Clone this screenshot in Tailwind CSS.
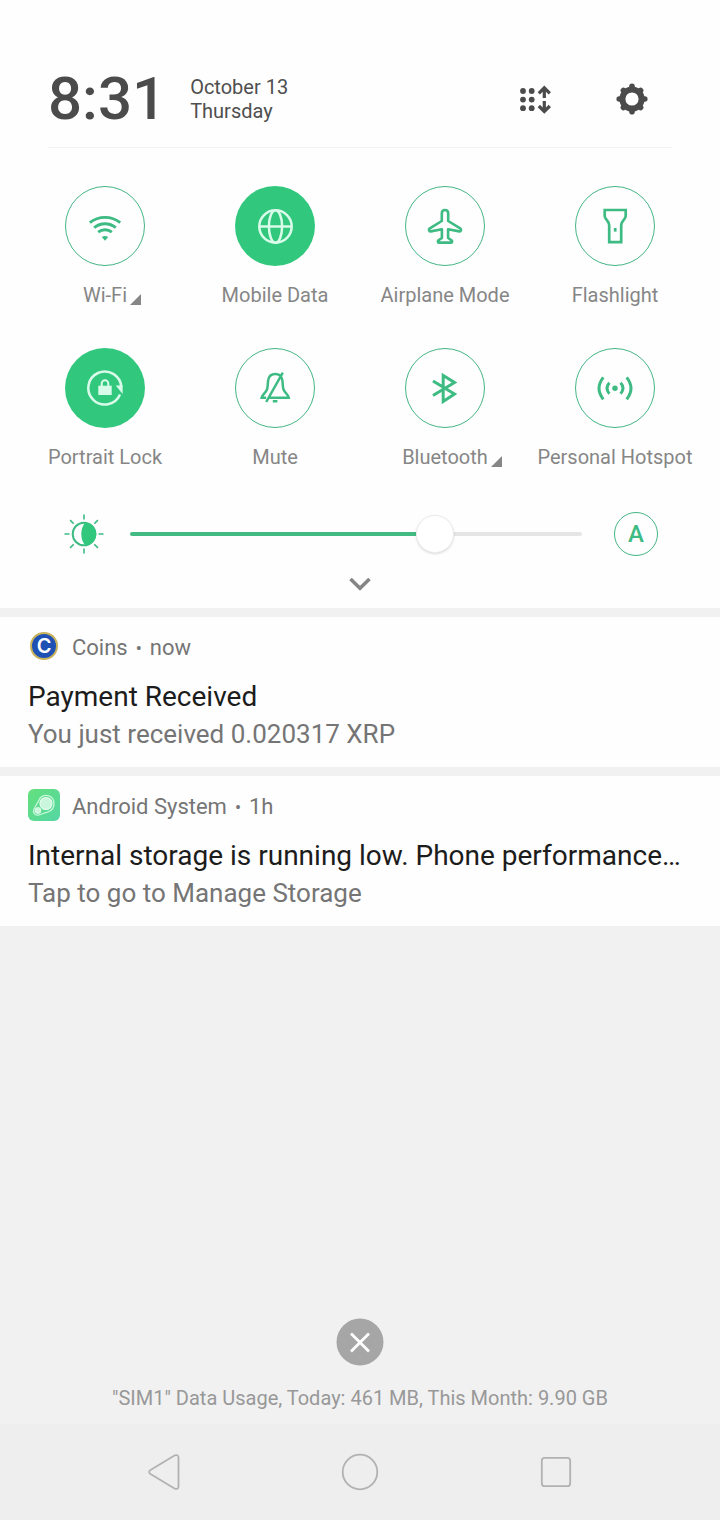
<!DOCTYPE html>
<html lang="en">
<head>
    <meta charset="UTF-8">
    <meta name="viewport" content="width=device-width, initial-scale=1.0">
    <title>Notification Shade</title>
    <script src="https://cdn.jsdelivr.net/npm/@tailwindcss/browser@4"></script>
</head>
<body class="bg-[#f1f1f1] font-[Roboto,sans-serif] min-h-screen flex flex-col">

    <!-- Quick settings -->
    <section class="bg-[#fefefe] pt-[50px]">
        <header class="mx-12 h-[98px] flex items-center border-b border-[#f1f1f1]">
            <time class="text-[60px] leading-none font-medium text-[#4b4b4b]">8:31</time>
            <p class="ml-6 text-xl leading-6 text-[#4f4f4f]">October 13<br>Thursday</p>
            <div class="ml-auto mr-5 flex gap-14">
                <button aria-label="Edit tiles" class="size-10">
                    <svg viewBox="0 0 40 40" class="size-10" fill="#4b4b4b">
                        <circle cx="7" cy="12" r="2.9"/><circle cx="15.7" cy="12" r="2.9"/>
                        <circle cx="7" cy="20.6" r="2.9"/><circle cx="15.7" cy="20.6" r="2.9"/>
                        <circle cx="7" cy="29.2" r="2.9"/><circle cx="15.7" cy="29.2" r="2.9"/>
                        <path d="M28.3 19V9M22.8 14.3l5.5-5.5 5.5 5.5M28.3 22v10M22.8 27l5.5 5.5 5.5-5.5" fill="none" stroke="#4b4b4b" stroke-width="3.2"/>
                    </svg>
                </button>
                <button aria-label="Settings" class="size-10">
                    <svg viewBox="-20 -20 40 40" class="size-10" fill="none" stroke="#4b4b4b">
                        <circle r="9.6" stroke-width="6"/>
                        <path d="M0-11v-1.8M0 11v1.8M-11 0h-1.8M11 0h1.8M-7.8-7.8l-.8-.8M7.8-7.8l.8-.8M-7.8 7.8l-.8.8M7.8 7.8l.8.8" stroke-width="5.6" stroke-linecap="round"/>
                    </svg>
                </button>
            </div>
        </header>

        <div class="px-5 pt-[38px] grid grid-cols-4 gap-y-[39px] text-xl leading-7 text-[#868686]">
            <button class="flex flex-col items-center gap-[15px]">
                <span class="size-20 rounded-full border border-[#45b585] flex items-center justify-center">
                    <svg viewBox="0 0 40 40" class="size-10" fill="none" stroke="#3dbb83" stroke-width="2.9">
                        <path d="M4.8 16.6C13.5 9.6 26.5 9.6 35.2 16.6M9.2 21.6C15.5 16.4 24.5 16.4 30.8 21.6M13.2 26.2C17 23 23 23 26.8 26.2"/>
                        <path d="M16.8 31q3.2-2 6.4 0L20 34.8z" fill="#3dbb83" stroke="none"/>
                    </svg>
                </span>
                <span class="relative">Wi-Fi
                    <svg viewBox="0 0 11 11" class="absolute left-full bottom-1 ml-[3px] size-[11px]"><path d="M11 0v11H0z" fill="#868686"/></svg>
                </span>
            </button>
            <button class="flex flex-col items-center gap-[15px]">
                <span class="size-20 rounded-full bg-[#31c87e] flex items-center justify-center">
                    <svg viewBox="0 0 40 40" class="size-10" fill="none" stroke="#d9fbe9" stroke-width="2.5">
                        <circle cx="20.5" cy="20.5" r="16.2"/>
                        <ellipse cx="20.5" cy="20.5" rx="6.6" ry="16.2"/>
                        <path d="M4.3 20.5h32.4"/>
                    </svg>
                </span>
                <span>Mobile Data</span>
            </button>
            <button class="flex flex-col items-center gap-[15px]">
                <span class="size-20 rounded-full border border-[#45b585] flex items-center justify-center">
                    <svg viewBox="0 0 40 40" class="size-10" fill="none" stroke="#3dbb83" stroke-width="2.6" stroke-linejoin="round">
                        <path d="M20 4c-2 0-3.2 1.6-3.2 3.6V15L4.8 22.4c-1.6 1-.8 3.4 1 3l11.1-2.2V32l-3.5 2.3c-.9.7-.6 2.3.4 2.3h12.4c1 0 1.3-1.6.4-2.3L23.1 32v-8.8l11.1 2.2c1.8.4 2.6-2 1-3L23.2 15V7.600C23.200 5.600 22 4 20 4z"/>
                    </svg>
                </span>
                <span>Airplane Mode</span>
            </button>
            <button class="flex flex-col items-center gap-[15px]">
                <span class="size-20 rounded-full border border-[#45b585] flex items-center justify-center">
                    <svg viewBox="0 0 40 40" class="size-10" fill="none" stroke="#3dbb83" stroke-width="2.7">
                        <path d="M9.7 4h21v6c0 3.500-4.500 5-4.500 9v17.200h-12V19c0-4-4.500-5.500-4.500-9z"/>
                        <path d="M20.200 22v3.600"/>
                    </svg>
                </span>
                <span>Flashlight</span>
            </button>
            <button class="flex flex-col items-center gap-[15px]">
                <span class="size-20 rounded-full bg-[#31c87e] flex items-center justify-center">
                    <svg viewBox="0 0 40 40" class="size-10" fill="none" stroke="#d9fbe9" stroke-width="2.500">
                        <path d="M35 26.500A16.500 16.500 0 1 1 36.300 19"/>
                        <path d="M30.800 17.500h6.800v8.500z" fill="#d9fbe9" stroke="none"/>
                        <path d="M13.300 17.700h13.400V27H13.300z" fill="#d9fbe9" stroke="none"/>
                        <path d="M16.700 18v-2.500a3.300 3.300 0 0 1 6.600 0V18" stroke-width="2"/>
                    </svg>
                </span>
                <span>Portrait Lock</span>
            </button>
            <button class="flex flex-col items-center gap-[15px]">
                <span class="size-20 rounded-full border border-[#45b585] flex items-center justify-center">
                    <svg viewBox="0 0 40 40" class="size-10" fill="none" stroke="#3dbb83" stroke-width="2.500">
                        <path d="M14 29.700h19.800c-.3-3-4.400-5-5.400-8.500-1-4-.5-7-1.200-9.700-.8-3.500-3.200-5.500-6.900-5.500s-6.200 2-7 5.500c-.7 2.700-.2 5.700-1.200 9.700-1 3.500-5.200 5.500-5.500 8.500h4.500M27.800 4.600L11.200 34M17.800 33.200h4.600"/>
                    </svg>
                </span>
                <span>Mute</span>
            </button>
            <button class="flex flex-col items-center gap-[15px]">
                <span class="size-20 rounded-full border border-[#45b585] flex items-center justify-center">
                    <svg viewBox="0 0 40 40" class="size-10" fill="none" stroke="#3dbb83" stroke-width="3">
                        <path d="M8 13l21.500 13-11.300 7.500v-26l11.300 7L8 27.500"/>
                    </svg>
                </span>
                <span class="relative">Bluetooth
                    <svg viewBox="0 0 11 11" class="absolute left-full bottom-1 ml-[3px] size-[11px]"><path d="M11 0v11H0z" fill="#868686"/></svg>
                </span>
            </button>
            <button class="flex flex-col items-center gap-[15px]">
                <span class="size-20 rounded-full border border-[#45b585] flex items-center justify-center">
                    <svg viewBox="0 0 40 40" class="size-10" fill="none" stroke="#3dbb83" stroke-width="3">
                        <path d="M8.300 9.300Q-.3 20.300 8.300 31.300M31.700 9.300Q40.300 20.300 31.700 31.300M14.400 14.800Q9.600 20.300 14.400 25.800M25.600 14.800Q30.400 20.300 25.600 25.800"/>
                        <circle cx="20" cy="20.300" r="2.700" fill="#3dbb83" stroke="none"/>
                    </svg>
                </span>
                <span class="whitespace-nowrap">Personal Hotspot</span>
            </button>
        </div>

        <!-- Brightness -->
        <div class="pt-[41px] pl-16 pr-[62px] flex items-center">
            <svg viewBox="-20 -20 40 40" class="size-10 shrink-0" fill="none" stroke="#3dbb83" stroke-width="2">
                <circle r="11.300"/>
                <path d="M1-11.300C-4-5-4 5 1 11.300A11.300 11.300 0 0 0 1-11.300z" fill="#31c87e" stroke="none"/>
                <path d="M0-14.500v-5M0 14.500v5M-14.500 0h-5M14.500 0h5M-10.300-10.300l-3.600-3.600M10.300-10.300l3.600-3.600M-10.300 10.300l-3.600 3.600M10.300 10.300l3.600 3.600" stroke-width="1.600"/>
            </svg>
            <input type="range" aria-label="Brightness" min="0" max="100" value="69"
                class="ml-[26px] mr-8 min-w-0 flex-1 h-10 appearance-none bg-transparent [&::-webkit-slider-runnable-track]:h-1 [&::-webkit-slider-runnable-track]:rounded-full [&::-webkit-slider-runnable-track]:bg-[linear-gradient(to_right,#42bb82_67%,#e5e5e5_67%)] [&::-webkit-slider-thumb]:appearance-none [&::-webkit-slider-thumb]:size-[38px] [&::-webkit-slider-thumb]:-mt-[17px] [&::-webkit-slider-thumb]:rounded-full [&::-webkit-slider-thumb]:bg-white [&::-webkit-slider-thumb]:border [&::-webkit-slider-thumb]:border-[#ececec] [&::-webkit-slider-thumb]:shadow-sm">
            <button aria-label="Auto brightness" class="size-11 shrink-0 rounded-full border border-[#45b585] text-2xl font-medium text-[#3dbb83]">A</button>
        </div>
        <button aria-label="Expand" class="block mx-auto mt-4 mb-3 size-6">
            <svg viewBox="0 0 24 24" class="size-6" fill="none" stroke="#858585" stroke-width="3.600"><path d="M2.500 7l9.500 9.200L21.500 7"/></svg>
        </button>
    </section>

    <!-- Notifications -->
    <main class="mt-[9px] flex flex-col gap-[9px]">
        <article class="bg-[#fefefe] px-7 pt-[13px] pb-[14px]">
            <div class="h-8 flex gap-3 text-[22px] leading-9 text-[#757575]">
                <span class="size-8 flex items-center justify-center">
                    <span class="size-7 rounded-full border-2 border-[#c9b25c] bg-[#1f50b4] text-white text-xl leading-none font-semibold font-[Inter,sans-serif] flex items-center justify-center">C</span>
                </span>
                <p>Coins<span class="mx-2 text-lg leading-none">•</span>now</p>
            </div>
            <h2 class="mt-4 text-[28px] leading-[38px] text-[#1c1c1c] truncate">Payment Received</h2>
            <p class="-mt-px text-[26px] leading-[38px] text-[#757575] truncate">You just received 0.020317 XRP</p>
        </article>
        <article class="bg-[#fefefe] px-7 pt-[13px] pb-[14px]">
            <div class="h-8 flex gap-3 text-[22px] leading-9 text-[#757575]">
                <svg viewBox="0 0 32 32" class="size-8">
                    <defs>
                        <linearGradient id="sys" x1="0" y1="0" x2="1" y2="1"><stop offset="0" stop-color="#63e07c"/><stop offset="1" stop-color="#55d6a4"/></linearGradient>
                    </defs>
                    <rect width="32" height="32" rx="6" fill="url(#sys)"/>
                    <path d="M12.500 8.500C17 4.500 26 6 26 14.500c0 8-6.500 8.500-9.500 9.500l-5.500 2c-4.500 1-6.500-2.500-5-6z" fill="none" stroke="#c9f8dc" stroke-width="1.200"/>
                    <circle cx="18" cy="14.500" r="6" fill="#c9f6dc" stroke="#e4fdee" stroke-width="1.200"/>
                    <circle cx="10" cy="21.500" r="2.900" fill="#c9f6dc" stroke="#e4fdee"/>
                </svg>
                <p>Android System<span class="mx-2 text-lg leading-none">•</span>1h</p>
            </div>
            <h2 class="mt-4 text-[28px] leading-[38px] text-[#1c1c1c] truncate">Internal storage is running low. Phone performance…</h2>
            <p class="-mt-px text-[26px] leading-[38px] text-[#757575] truncate">Tap to go to Manage Storage</p>
        </article>
    </main>

    <footer class="mt-auto">
        <button aria-label="Clear all" class="block mx-auto size-12">
            <svg viewBox="0 0 48 48" class="size-12">
                <circle cx="24" cy="24" r="23.500" fill="#a6a6a6"/>
                <path d="M15 15.500l18 18M33 15.500l-18 18" stroke="#fff" stroke-width="2.800"/>
            </svg>
        </button>
        <p class="mt-4 mb-[10px] text-center text-xl leading-8 text-[#989898]">"SIM1" Data Usage, Today: 461 MB, This Month: 9.90 GB</p>
        <nav class="h-24 px-[66px] grid grid-cols-3 place-items-center bg-[#eeeeee]">
            <button aria-label="Back" class="size-10">
                <svg viewBox="0 0 40 40" class="size-10" fill="none" stroke="#b2b2b2" stroke-width="1.800"><path d="M6.500 18L30.500 3.600c2-1.200 4-.3 4 2v28.800c0 2.300-2 3.200-4 2L6.500 22c-1.800-1-1.800-3 0-4z"/></svg>
            </button>
            <button aria-label="Home" class="size-10">
                <svg viewBox="0 0 40 40" class="size-10" fill="none" stroke="#b2b2b2" stroke-width="1.800"><circle cx="20" cy="20" r="17.300"/></svg>
            </button>
            <button aria-label="Recent apps" class="size-10">
                <svg viewBox="0 0 40 40" class="size-10" fill="none" stroke="#b2b2b2" stroke-width="1.800"><rect x="5.800" y="5.800" width="28.400" height="28.400" rx="3"/></svg>
            </button>
        </nav>
    </footer>
</body>
</html>
